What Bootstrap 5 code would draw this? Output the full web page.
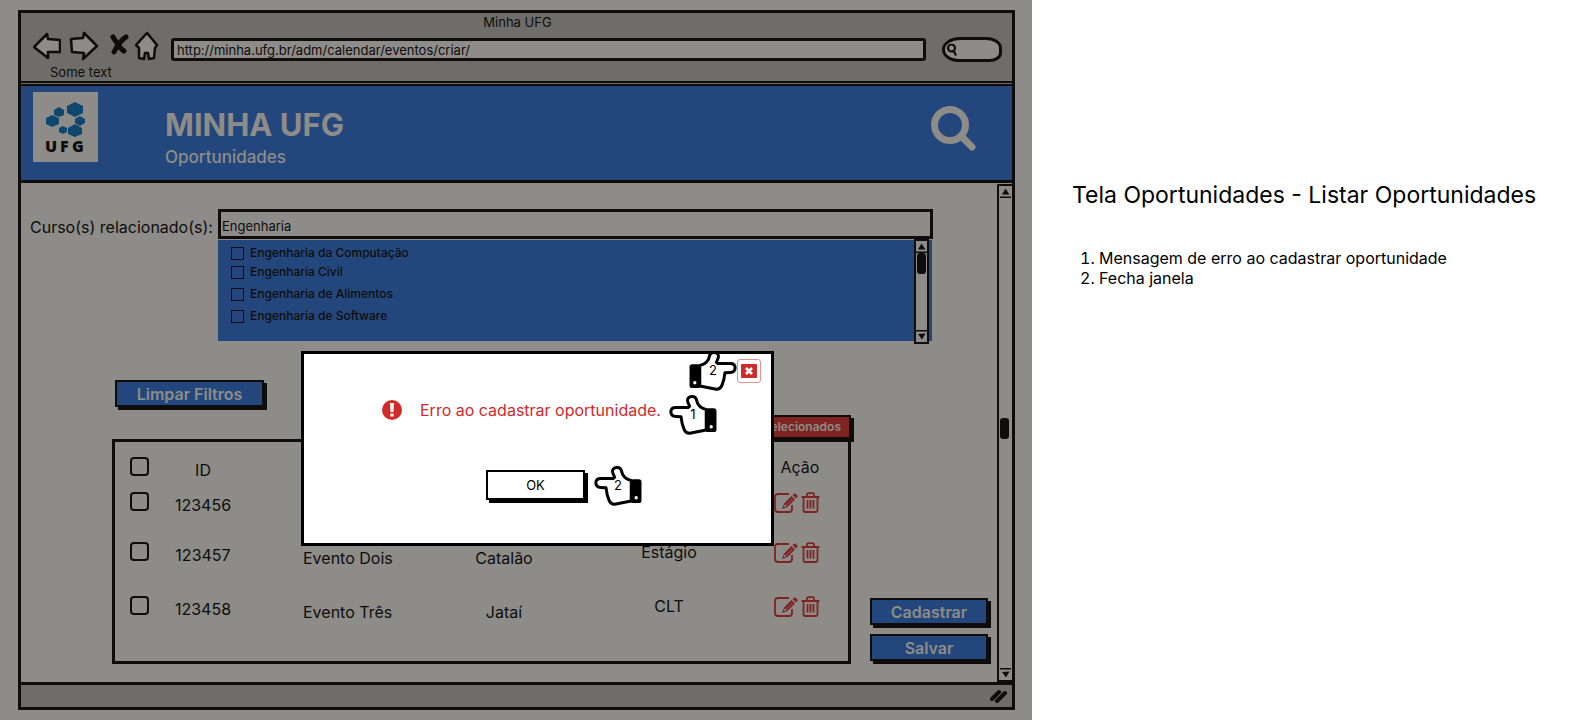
<!DOCTYPE html>
<html lang="pt-BR">
<head>
<meta charset="utf-8">
<meta name="viewport" content="width=device-width, initial-scale=1">
<title>Minha UFG - Oportunidades</title>
<link href="https://cdn.jsdelivr.net/npm/bootstrap@5.3.0/dist/css/bootstrap.min.css" rel="stylesheet">
<style>
:root{--ink:#0e0d0b;--paper:#8d8c89;--chrome:#6e6d6a;--blue:#23477c;--brick:#7f2421;--alert:#d12a2a}
body{font-family:Inter,"Liberation Sans",sans-serif;font-size:16px;line-height:20px;color:#000;background:#fff}
svg{display:block}
.board{display:grid;grid-template-columns:1030fr 541fr;min-height:100vh}
.stage{background:var(--paper);color:var(--ink);padding:10px 17px 10px 18px}
.window{border:3px solid var(--ink);background:var(--paper)}
.fs-s{font-size:13px;line-height:18px}
.fs-m{font-size:16px;line-height:20px}

/* browser chrome */
.chrome-bar{background:var(--chrome);border-bottom:5px double var(--ink);padding-left:12px;padding-right:10px}
.tool{border:0;padding:0;background:none;display:block}
.field{background:var(--paper);border:3px solid var(--ink);border-radius:0;color:var(--ink);min-width:0;outline:0}
.addr{height:23px;padding:0 3px;border-radius:3px;margin:7px 0 0 12px}
.pill{width:60px;height:25px;border-radius:20px 18px 14px 18px/14px 12px 10px 14px;padding:0 4px 0 16px}
.pill-wrap{margin:6px 0 0 16px}
.chrome-note{padding:2px 0 0 17px;line-height:17px}

/* page banner */
.banner{background:var(--blue);color:var(--paper);border-bottom:3px solid var(--ink);height:97px}
.banner h1{font-size:31px;line-height:36px;font-weight:700}
.banner p{font-size:17px;line-height:20px;font-weight:500}
.logo{background:var(--paper);width:65px;height:70px;margin:6px 0 0 12px}
.logo text{font-family:"Open Sans",sans-serif;font-weight:800;font-size:16px;fill:var(--ink)}
.titles{padding-left:67px;padding-top:21px}
.banner .tool{margin:20px 35px 0 auto}

/* course filter */
.main-area{padding:26px 0 18px}
.course-label{width:197px;padding-left:9px;white-space:nowrap}
.course{height:30px;padding:3px 1px 0}
.options{background:var(--blue);height:101px;margin:1px 1px 0 0;padding:4px 0 0 13px}
.options label{display:flex;align-items:center;gap:6px;font-size:12px;line-height:18px;font-weight:500;margin-bottom:4px}
.options label:first-child{margin-bottom:1px}
.check{appearance:none;flex:none;margin:0;width:13px;height:13px;border:1px solid var(--ink);background:none}
.check-lg{display:block;width:19px;height:19px;border:2px solid var(--ink);border-radius:4px}
.sbar{width:15px;flex:none;border:2px solid var(--ink);background:var(--paper);position:relative}
.sbar svg{width:100%;height:12px}
.sbar .thumb{position:absolute;left:1px;width:9px;height:21px;border-radius:3px;background:var(--ink)}
.sbar-list{height:105px;margin:-5px 3px 0 0}
.sbar-list .thumb{top:12px}
.sbar-page{border-right:0;margin-top:1px}
.sbar-page .thumb{top:47%}

/* buttons */
.press{border:2px solid var(--ink);box-shadow:3px 3px 0 var(--ink);background:var(--blue);color:var(--paper);padding:0;font-weight:600;font-size:16px;line-height:24px;height:27px}
.press-red{background:var(--brick);font-size:12px;line-height:20px;height:24px;width:110px;padding-right:8px;text-align:right}
.clear-btn{width:149px;margin-left:3px}
.del-row{margin-top:8px}

/* listing */
.grid-area{margin-left:91px;margin-right:9px;gap:19px}
.filter-col{padding-top:39px;min-width:0}
.list-box{border:3px solid var(--ink);padding-top:15px}
.list-box table{width:100%;table-layout:fixed}
.list-box th,.list-box td{padding:0;font-weight:400;text-align:center;vertical-align:top}
.list-box th:first-child,.list-box td:first-child{padding-left:15px}
.list-box .c-id{padding-top:3px}
.list-box .c-ev{padding-top:6px;text-align:left;padding-left:61px}
.list-box .c-lo{padding-top:6px}
.r-head{height:35px}
.r-one{height:50px}
.r-two{height:54px}
.acts{display:flex;justify-content:center;gap:3px;padding-right:6px}
.side{width:118px;gap:9px;padding-bottom:3px}
.status{background:var(--chrome);border-top:3px solid var(--ink);height:25px}

/* error dialog */
.dialog-box{position:absolute;top:351px;left:calc(50% - 215px);width:473px;height:195px;background:#fff;border:3px solid #000;color:#000}
.dialog-top{padding:5px 10px 0 0;height:29px}
.hand{position:relative;width:48px;height:40px;flex:none;margin:0}
.hand svg{overflow:visible}
.hand span{position:absolute;left:0;width:100%;top:10px;text-align:center;font-size:13px;line-height:18px}
.hand-flip svg{transform:scaleX(-1)}
.hand-up{margin-top:-8px}
.closer{width:24px;height:24px;border:1px solid #e88f8f;border-radius:3px;background:#fff;padding:4px 3px}
.closer svg{width:16px;height:14px}
.msg{color:var(--alert);gap:18px;height:30px}
.msg-row{margin-top:12px;padding-left:78px;gap:8px}
.ok-row{margin-top:31px;padding-left:182px;gap:9px}
.btn-ok{background:#fff;color:#000;border-color:#000;box-shadow:3px 3px 0 #000;width:99px;height:30px;margin-top:4px;font-size:13px;font-weight:400}

/* side notes */
.notes{padding:182px 0 0 40px}
.notes h2{font-size:23px;line-height:26px;font-weight:400;white-space:nowrap}
.notes ol{padding-left:27px;margin:40px 0 0}
</style>
</head>
<body>
<svg width="0" height="0" class="position-absolute" aria-hidden="true">
  <symbol id="hand" viewBox="0 0 144 121" overflow="visible">
    <path d="M112 44C100 42 92 36 86 26L82 13C78 3 64 2 57 10C52 17 58 25 62 34L58 38L20 38C9 38 5 44 5 51C5 60 11 65 20 65L36 66C37 78 40 92 45 104C49 114 56 117 66 115L85 111L112 106Z" fill="#fff" stroke="#000" stroke-width="9" stroke-linejoin="round"/>
    <rect x="110" y="40" width="33" height="72" rx="8" fill="#000"/><circle cx="127" cy="96" r="5" fill="#fff"/>
  </symbol>
  <symbol id="edit" viewBox="0 0 24 20">
    <path d="M15 1H4A3 3 0 0 0 1 4V16A3 3 0 0 0 4 19H15A3 3 0 0 0 18 16V12" fill="none" stroke="#7f2421" stroke-width="1.800"/>
    <path d="M8 16L10 10.500L17.500 3L21 6.500L13.500 14ZM18.500 2L20 .8Q21 0 22 1L23.500 2.600Q24 3.500 23.200 4.300L22 5.500Z" fill="#7f2421"/><path d="M12 12.500L18.500 6" stroke="#8d8c89" stroke-width=".6"/><circle cx="11" cy="13" r="1.100" fill="#8d8c89"/>
  </symbol>
  <symbol id="trash" viewBox="0 0 19 21">
    <path d="M.5 5H18.500M2.500 5V18.500Q2.500 20 4 20H15Q16.500 20 16.500 18.500V5M6 5V2.500Q6 1.200 7.500 1.200H11.500Q13 1.200 13 2.500V5M6.500 8V16.500M9.500 8V16.500M12.500 8V16.500" fill="none" stroke="#7f2421" stroke-width="1.800"/>
  </symbol>
  <symbol id="up" viewBox="0 0 11 12"><path d="M2 8.500L5.500 2.500L9.500 8.500ZM0 10.500H11V12H0Z" fill="#0e0d0b"/></symbol>
  <symbol id="down" viewBox="0 0 11 12"><path d="M2 4L9.500 3.500L6 9.500ZM0 0H11V1.500H0Z" fill="#0e0d0b"/></symbol>
</svg>
<div class="board">
<div class="stage position-relative d-flex flex-column">
  <div class="window d-flex flex-column flex-grow-1">
    <div class="chrome-bar">
      <div class="fs-s text-center">Minha UFG</div>
      <div class="d-flex align-items-start">
        <button class="tool" aria-label="Voltar"><svg width="28" height="30" viewBox="0 0 28 30"><path d="M1 16L14 3L15 8L27 9V21L15 21L15 27Z" fill="#8d8c89" stroke="#0e0d0b" stroke-width="2.500" stroke-linejoin="round"/></svg></button>
        <button class="tool ms-2" aria-label="Avançar"><svg width="30" height="30" viewBox="0 0 30 30"><path d="M28 15L15 2L14 7L2 8L3 21L15 22L14 28Z" fill="#8d8c89" stroke="#0e0d0b" stroke-width="2.500" stroke-linejoin="round"/></svg></button>
        <button class="tool ms-2" aria-label="Parar"><svg width="24" height="30" viewBox="0 0 24 30"><path d="M6 6C9 10 12 17 17 20M19 6C14 9 10 15 7 21" fill="none" stroke="#0e0d0b" stroke-width="5" stroke-linecap="round"/></svg></button>
        <button class="tool ms-1" aria-label="Início"><svg width="24" height="30" viewBox="0 0 24 30"><path d="M12 2L22 14L20 17L19 27L14 28L13 22H10L9 28L4 27V17L1 14Z" fill="#8d8c89" stroke="#0e0d0b" stroke-width="2.500" stroke-linejoin="round"/></svg></button>
        <input class="field addr fs-s flex-grow-1" aria-label="Endereço" value="http://minha.ufg.br/adm/calendar/eventos/criar/">
        <div class="position-relative pill-wrap">
          <input class="field pill fs-s d-block" aria-label="Pesquisar">
          <svg class="position-absolute top-50 start-0 ms-1 translate-middle-y" width="11" height="13" viewBox="0 0 11 13"><path d="M8 8L10 12M9 4.500A3.500 3.500 0 1 1 2 4.500A3.500 3.500 0 1 1 9 4.500" fill="none" stroke="#0e0d0b" stroke-width="2.200"/></svg>
        </div>
      </div>
      <div class="fs-s chrome-note">Some text</div>
    </div>
    <header class="banner d-flex align-items-start">
      <div class="logo flex-shrink-0">
        <svg width="65" height="70" viewBox="0 0 65 70" role="img" aria-label="UFG"><path fill="#0f476e" d="M42 10l8 4v7l-8 4-8-4v-7zM26 15l5 3v5l-5 2-5-2v-5zM19 23l7 3v6l-7 3-6-3v-6zM47 24l5 3v4l-5 3-5-3v-4zM30 34l4 2v4l-4 2-4-2v-4zM42 32l7 4v6l-7 3-7-3v-6z"/><text y="60" x="12 27 39">UFG</text></svg>
      </div>
      <div class="titles">
        <h1 class="mb-0">MINHA UFG</h1>
        <p class="mb-0 mt-1">Oportunidades</p>
      </div>
      <button class="tool" aria-label="Buscar"><svg width="46" height="46" viewBox="0 0 46 46"><circle cx="19" cy="19" r="15.500" fill="none" stroke="#8d8c89" stroke-width="7"/><path d="M30 30L41 41" stroke="#8d8c89" stroke-width="7" stroke-linecap="round"/></svg></button>
    </header>
    <div class="d-flex flex-grow-1">
      <main class="main-area flex-grow-1 d-flex flex-column">
        <div class="d-flex me-5 pe-3">
          <label for="curso" class="course-label fs-m pt-2">Curso(s) relacionado(s):</label>
          <div class="flex-grow-1">
            <input id="curso" class="field course fs-s w-100 d-block" value="Engenharia">
            <div class="options d-flex">
              <div class="flex-grow-1">
                <label><input type="checkbox" class="check">Engenharia da Computação</label>
                <label><input type="checkbox" class="check">Engenharia Civil</label>
                <label><input type="checkbox" class="check">Engenharia de Alimentos</label>
                <label><input type="checkbox" class="check">Engenharia de Software</label>
              </div>
              <div class="sbar sbar-list d-flex flex-column justify-content-between"><svg><use href="#up"/></svg><span class="thumb"></span><svg><use href="#down"/></svg></div>
            </div>
          </div>
        </div>
        <div class="grid-area d-flex flex-grow-1">
          <div class="flex-grow-1 d-flex flex-column filter-col">
            <div class="d-flex"><button class="press clear-btn">Limpar Filtros</button></div>
            <div class="d-flex justify-content-end del-row"><button class="press press-red">Selecionados</button></div>
            <div class="list-box flex-grow-1">
              <table>
                <colgroup><col style="width:49px"><col style="width:78px"><col style="width:180px"><col style="width:164px"><col style="width:166px"><col style="width:96px"></colgroup>
                <thead><tr class="r-head"><th><input type="checkbox" class="check check-lg" aria-label="Todos"></th><th class="c-id">ID</th><th></th><th></th><th></th><th>Ação</th></tr></thead>
                <tbody>
                <tr class="r-one"><td><input type="checkbox" class="check check-lg" aria-label="123456"></td><td class="c-id">123456</td><td></td><td></td><td></td><td><div class="acts"><button class="tool" aria-label="Editar"><svg width="24" height="20"><use href="#edit"/></svg></button><button class="tool" aria-label="Excluir"><svg width="19" height="21"><use href="#trash"/></svg></button></div></td></tr>
                <tr class="r-two"><td><input type="checkbox" class="check check-lg" aria-label="123457"></td><td class="c-id">123457</td><td class="c-ev">Evento Dois</td><td class="c-lo">Catalão</td><td>Estágio</td><td><div class="acts"><button class="tool" aria-label="Editar"><svg width="24" height="20"><use href="#edit"/></svg></button><button class="tool" aria-label="Excluir"><svg width="19" height="21"><use href="#trash"/></svg></button></div></td></tr>
                <tr><td><input type="checkbox" class="check check-lg" aria-label="123458"></td><td class="c-id">123458</td><td class="c-ev">Evento Três</td><td class="c-lo">Jataí</td><td>CLT</td><td><div class="acts"><button class="tool" aria-label="Editar"><svg width="24" height="20"><use href="#edit"/></svg></button><button class="tool" aria-label="Excluir"><svg width="19" height="21"><use href="#trash"/></svg></button></div></td></tr>
                </tbody>
              </table>
            </div>
          </div>
          <div class="side d-flex flex-column justify-content-end flex-shrink-0"><button class="press">Cadastrar</button><button class="press">Salvar</button></div>
        </div>
      </main>
      <div class="sbar sbar-page d-flex flex-column justify-content-between"><svg><use href="#up"/></svg><span class="thumb"></span><svg><use href="#down"/></svg></div>
    </div>
    <footer class="status d-flex justify-content-end pe-1"><svg width="18" height="20" viewBox="0 0 18 20"><path d="M2 14L9 7M7 16L15 8" stroke="#0e0d0b" stroke-width="4" stroke-linecap="round"/></svg></footer>
  </div>
  <section class="dialog-box" role="dialog" aria-label="Erro">
    <div class="dialog-top d-flex justify-content-end align-items-start">
      <figure class="hand hand-flip hand-up"><svg width="48" height="40"><use href="#hand"/></svg><span>2</span></figure>
      <button class="closer" aria-label="Fechar"><svg viewBox="0 0 16 14"><rect width="16" height="14" rx="1" fill="#d12a2a"/><path d="M5 4L11 10M11 4L5 10" stroke="#fff" stroke-width="2.500"/></svg></button>
    </div>
    <div class="msg-row d-flex align-items-start">
      <div class="msg fs-m d-flex align-items-center"><svg width="20" height="20" viewBox="0 0 20 20"><circle cx="10" cy="10" r="10" fill="#d12a2a"/><path d="M8 3H12L11.500 12H8.500ZM8.400 13.500H11.600V16.500H8.400Z" fill="#fff"/></svg><span>Erro ao cadastrar oportunidade.</span></div>
      <figure class="hand"><svg width="48" height="40"><use href="#hand"/></svg><span>1</span></figure>
    </div>
    <div class="ok-row d-flex align-items-start">
      <button class="press btn-ok">OK</button>
      <figure class="hand"><svg width="48" height="40"><use href="#hand"/></svg><span>2</span></figure>
    </div>
  </section>
</div>
<aside class="notes">
  <h2 class="mb-0">Tela Oportunidades - Listar Oportunidades</h2>
  <ol class="fs-m"><li>Mensagem de erro ao cadastrar oportunidade</li><li>Fecha janela</li></ol>
</aside>
</div>
<script src="https://cdn.jsdelivr.net/npm/bootstrap@5.3.0/dist/js/bootstrap.bundle.min.js"></script>
</body>
</html>
